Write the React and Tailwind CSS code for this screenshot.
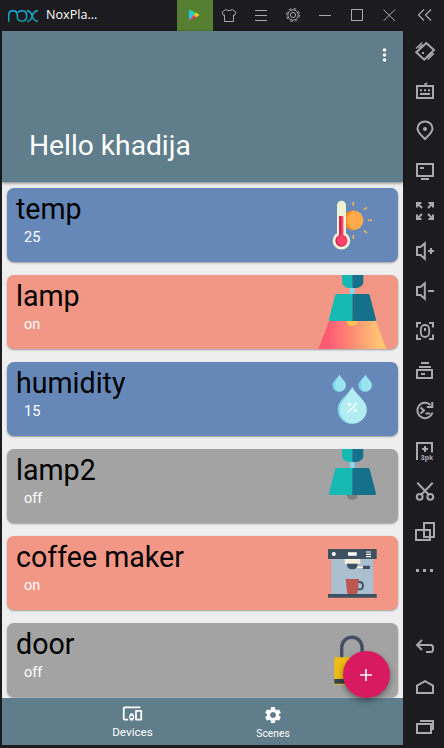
import { MdDevicesOther, MdSettings } from "react-icons/md";

function NoxLogo() {
  return (
    <svg width="32" height="16" viewBox="7 7 32 16" fill="none" stroke="url(#nox)" strokeWidth="1.5">
      <defs>
        <linearGradient id="nox" x1="0" y1="9" x2="0" y2="21" gradientUnits="userSpaceOnUse">
          <stop offset="0" stopColor="#12bbe6" />
          <stop offset="1" stopColor="#109aa6" />
        </linearGradient>
      </defs>
      <path d="M8.700 21v-6.500Q8.700 9.800 13 9.800T17.300 14.500V16Q17.500 20.200 22 20.200T26.700 15T22 9.800Q19 9.800 18 11.500" />
      <path d="M27 9.800C30.500 9.800 31.300 12 32.200 15S34.500 20.200 38 20.200M38 9.800C34.500 9.800 33.200 12 32.200 15S30.500 20.200 27 20.200" />
    </svg>
  );
}

function TitleIcon({ children }) {
  return (
    <div className="h-[31px] w-8">
      <svg width="32" height="31" viewBox="0 0 32 31" fill="none" stroke="#a9a9ac" strokeWidth="1">
        {children}
      </svg>
    </div>
  );
}

function TitleBar() {
  return (
    <header className="flex h-[31px] shrink-0 items-center">
      <div className="flex w-[177px] items-center pl-[7px]">
        <NoxLogo />
        <span className="ml-[7px] font-['Open_Sans',sans-serif] text-[12.600px] leading-none text-white">NoxPla...</span>
      </div>
      <div className="flex h-[31px] w-9 items-center justify-center bg-[#567f31]">
        <svg width="36" height="31" viewBox="0 0 36 31">
          <path d="M12 9.500v11l5.600-5.500z" fill="#2cc3f2" />
          <path d="M12 9.300l7.600 3.600-2.400 2.600z" fill="#1fdc8c" />
          <path d="M12 20.700l7.600-3.600-2.400-2.600z" fill="#ee3b58" />
          <path d="M19.300 12.700l3.200 2.300-3.200 2.300-2.500-2.300z" fill="#fccc1a" />
        </svg>
      </div>
      <TitleIcon>
        <path d="M12.500 9.500Q16 12 19.500 9.500L23 12.500 21.500 15.500 20.500 15V21.500H11.500V15L10.500 15.500 9 12.500z" />
      </TitleIcon>
      <TitleIcon>
        <path d="M10 10.500h12M10 15.500h12M10 20.500h12" />
      </TitleIcon>
      <TitleIcon>
        <circle cx="16" cy="15" r="2.600" />
        <circle cx="16" cy="15" r="5.200" />
        <circle cx="16" cy="15" r="6.500" strokeDasharray="2.600 2.500" />
      </TitleIcon>
      <TitleIcon>
        <path d="M10 15.500h12" />
      </TitleIcon>
      <TitleIcon>
        <rect x="10.500" y="9.500" width="11" height="11" />
      </TitleIcon>
      <TitleIcon>
        <path d="M10.500 9.500l11.500 11.500M22 9.500L10.500 21" />
      </TitleIcon>
      <svg width="38" height="31" viewBox="0 0 38 31" fill="none" stroke="#a9a9ac" strokeWidth="1.200">
        <path d="M19 9.500L13.500 15l5.500 5.500M26 9.500L20.500 15l5.500 5.500" />
      </svg>
    </header>
  );
}

const tools = [
  <>
    <path d="M22.300 12L30 19 20.200 28.700 12.300 21.300z" />
    <path d="M12 17.500l6-6M14.500 17.200l4-3.700M23.500 28.700l6.500-6.200M23.500 26.500l5-4.500" strokeWidth="1.200" />
    <path d="M18 22h2" />
  </>,
  <>
    <rect x="13" y="15" width="16" height="12" />
    <path d="M16 19.300h2M20 19.300h2M24 19.300h2M16 23h10M20.500 14l2.500-2" />
  </>,
  <>
    <path d="M21 28C17.500 24.500 13.500 21.500 13.500 17.500a7.500 7 0 0 1 15 0C28.500 21.500 24.500 24.500 21 28z" />
    <circle cx="21" cy="18" r="2" fill="#a9a9ac" stroke="none" />
  </>,
  <>
    <rect x="13" y="13" width="16" height="12" />
    <path d="M16 17h4M17 28h8" />
  </>,
  <>
    <path d="M17.500 12H13v4.500M24.500 12H29v4.500M17.500 28H13v-4.500M24.500 28H29v-4.500M13 12l5 5M29 12l-5 5M13 28l5-5M29 28l-5-5" />
  </>,
  <>
    <path d="M20.800 12.300L16.500 16H13v8h3.500l4.300 3.700zM24 20h6M27 17v6" />
  </>,
  <>
    <path d="M20.800 12.300L16.500 16H13v8h3.500l4.300 3.700zM24 20h6" />
  </>,
  <>
    <path d="M17 12h-4v4.500M25 12h4v4.500M17 28h-4v-4.500M25 28h4v-4.500" />
    <rect x="16.800" y="14" width="8.400" height="12" rx="4.200" strokeWidth="1.800" />
    <path d="M21 17v3" />
  </>,
  <>
    <path d="M17 12h8M15 16h12M13 19h15v8H13zM17 23h4" />
  </>,
  <>
    <path d="M28.500 21.500a7.700 7.700 0 1 1-2-7.500M28.300 11v5h-5.500" />
    <path d="M16.500 16.500l3.500 3-3.500 3M21.500 22.500h4.500" />
  </>,
  <>
    <path d="M13 29V12h15v9.500M21 15v6M18 18h6" />
    <text x="16.500" y="29" fontSize="7" fill="#b4b4b6" stroke="none" fontFamily="Liberation Mono, monospace" fontWeight="bold">3pk</text>
  </>,
  <>
    <path d="M13.300 11.800l11.500 12M28.700 11.800l-11.500 12" />
    <circle cx="15.700" cy="25.800" r="2.900" />
    <circle cx="26.300" cy="25.800" r="2.900" />
  </>,
  <>
    <rect x="12" y="19" width="14" height="10" />
    <rect x="20" y="12" width="10" height="14" />
  </>,
  <>
    <path d="M12 19.500h3M19 19.500h3M26 19.500h3" strokeWidth="3" />
  </>,
];

const androidKeys = [
  <>
    <path d="M18 14l-5 5 5 5M13 19h13.500q2.500 0 2.500 2.500v2q0 2.500-2.500 2.500H22" />
  </>,
  <>
    <path d="M13 27v-7.500l8-4.300 8 4.300V27z" />
  </>,
  <>
    <path d="M13 18h14v9H13zM16 15h13v9" />
  </>,
];

function ToolButton({ children }) {
  return (
    <svg className="block shrink-0" width="40" height="40" viewBox="0 0 40 40" fill="none" stroke="#a9a9ac" strokeWidth="2">
      {children}
    </svg>
  );
}

function Thermometer() {
  return (
    <>
      <circle cx="36.500" cy="32.300" r="9.900" fill="#ffab4d" />
      <path d="M36.500 22.400a9.900 9.900 0 0 0 0 19.800Q30 38 30 32.300T36.500 22.400z" fill="#fb8b1e" />
      <path d="M36.300 14v3.700M36.300 47v4M46.800 21.600l3.200-2.200M51 32.300h4M46.800 42.600l3.200 2.400" stroke="#ffb25c" strokeWidth="1.500" />
      <rect x="20" y="12.700" width="9" height="38" rx="4.500" fill="#eef2d4" />
      <circle cx="24.400" cy="52.700" r="8.800" fill="#eef2d4" />
      <rect x="22.200" y="28" width="4.200" height="24" rx="1" fill="#ff4169" />
      <path d="M22.200 28h2v22h-2z" fill="#cc1f52" />
      <circle cx="24.400" cy="52.700" r="6" fill="#cc1f52" />
      <circle cx="25" cy="52.200" r="5.300" fill="#ff4169" />
    </>
  );
}

function Lamp({ on }) {
  return (
    <>
      <defs>
        <linearGradient id="beam">
          <stop offset=".15" stopColor="#ff5c74" />
          <stop offset=".9" stopColor="#ffc574" />
        </linearGradient>
      </defs>
      {on && <path d="M12.500 45h46L69.200 74H1.200z" fill="url(#beam)" />}
      <circle cx="35.300" cy="45.500" r="5.600" fill={on ? "#ffc454" : "#808080"} />
      <path d="M33 12h4.500v8H33z" fill="#86d7f2" />
      <path d="M25 0h10.400v13H31q-6-2-6-6z" fill="#16b9b3" />
      <path d="M35.300 0h11v7q0 4-6 6h-5z" fill="#15718b" />
      <path d="M19.500 19h15.900v27H13q-1.500 0-1-2l6-23.500q.3-1.500 1.500-1.500z" fill="#16b9b3" />
      <path d="M35.300 19h15.900q1.200 0 1.600 1.500l6.100 23.500q.5 2-1 2H35.300z" fill="#15718b" />
    </>
  );
}

function Drops() {
  return (
    <>
      <path d="M22.300 12.700C25 17 29 19.500 29 23a6.700 6.700 0 0 1-13.400 0C15.600 19.500 20 17 22.300 12.700z" fill="#98e4ef" />
      <path d="M22.300 12.700C20 17 15.600 19.500 15.600 23a6.700 6.700 0 0 0 6 6.600Q17.500 27 18 22.500T22.300 12.700z" fill="#78d6e8" />
      <path d="M48.300 12.700C51 17 55 19.500 55 23a6.700 6.700 0 0 1-13.400 0C41.600 19.500 46 17 48.300 12.700z" fill="#98e4ef" />
      <path d="M48.300 12.700C46 17 41.600 19.500 41.600 23a6.700 6.700 0 0 0 6 6.600Q43.500 27 44 22.500T48.300 12.700z" fill="#78d6e8" />
      <path d="M35.300 25C40 34 49.800 38.500 49.800 47.300a14.500 14.500 0 0 1-29 0C20.800 38.500 30.500 34 35.300 25z" fill="#b2edf4" />
      <path d="M35.300 25C30.500 34 20.800 38.500 20.800 47.300a14.500 14.500 0 0 0 14 14.500Q22.500 58 23 46.500C23.500 39 30.500 35 35.300 25z" fill="#82dcea" />
      <path d="M30.500 50.500l9.800-9.800" stroke="#fff" strokeWidth="1.300" />
      <circle cx="32.500" cy="42.500" r="1.600" fill="#fff" />
      <circle cx="38.300" cy="48.500" r="1.600" fill="#fff" />
    </>
  );
}

function CoffeeMaker() {
  return (
    <>
      <path d="M14.300 23h42v35h-42z" fill="#aabfd0" />
      <path d="M11 13h48.700v10H11zM11 58h48.700v3.700H11z" fill="#3d5161" />
      <circle cx="16.800" cy="18" r="2" fill="#fff" />
      <path d="M31 16.300h8.700v3.400H31zM49 15.400h5v1.200h-5zM49 17.700h5v1.200h-5zM49 20h5v1.200h-5z" fill="#fff" />
      <path d="M27.700 23h15.500v4.700H27.700z" fill="#f5f1df" />
      <path d="M30 27.700h10.500v2q-1 3.500-5.200 3.500T30 29.700z" fill="#3d5161" />
      <path d="M40 30.500h6v1.500h-6z" fill="#f5f1df" />
      <path d="M46 29.700h7V33h-7z" fill="#3d5161" />
      <path d="M41 46h1.500q3.500 0 3.500 3.700t-3.500 3.700H41" fill="none" stroke="#3d5161" strokeWidth="1.800" />
      <path d="M28.700 43H42l-1.300 13q-.2 2-2 2H32q-1.800 0-2-2z" fill="#bb5650" />
    </>
  );
}

function Padlock() {
  return (
    <>
      <path d="M24.700 35V24.500a10.200 10.200 0 0 1 20.400 0V35" fill="none" stroke="#474f68" strokeWidth="3.400" />
      <path d="M17.300 34.300h35.500v27.400H17.300z" fill="#edbc16" />
      <path d="M17.300 56h35.500v4.800H17.300z" fill="#34454f" />
    </>
  );
}

const devices = [
  { name: "temp", state: "25", color: "bg-[#6688b9]", art: <Thermometer /> },
  { name: "lamp", state: "on", color: "bg-[#f29785]", art: <Lamp on /> },
  { name: "humidity", state: "15", color: "bg-[#6688b9]", art: <Drops /> },
  { name: "lamp2", state: "off", color: "bg-[#a3a3a3]", art: <Lamp /> },
  { name: "coffee maker", state: "on", color: "bg-[#f29785]", art: <CoffeeMaker /> },
  { name: "door", state: "off", color: "bg-[#a3a3a3]", art: <Padlock /> },
];

function DeviceCard({ name, state, color, art }) {
  return (
    <article className={`flex h-[74px] shrink-0 justify-between overflow-hidden rounded-[7px] shadow-[0_1px_2px_rgba(0,0,0,0.35)] ${color}`}>
      <div className="pl-[9px] pt-[4px]">
        <h2 className="whitespace-nowrap text-[28.600px] leading-[34px] text-black">{name}</h2>
        <p className="pl-[8px] pt-[3px] text-[14.500px] leading-[17px] text-white">{state}</p>
      </div>
      <svg className="block shrink-0" width="81" height="74" viewBox="0 0 81 74">{art}</svg>
    </article>
  );
}

function Phone() {
  return (
    <main className="relative ml-[2px] flex h-[714px] w-[401px] flex-col bg-[#eeeeee] font-[Roboto,sans-serif]">
      <div className="z-10 flex h-[151px] shrink-0 items-end justify-between bg-[#607d8b] pb-[19px] pl-[27px] shadow-[0_1px_3px_rgba(0,0,0,0.5)]">
        <h1 className="text-[28.200px] leading-[34px] text-white">Hello khadija</h1>
        <svg className="mb-[100px] mr-[16px]" width="5" height="16" viewBox="0 0 5 16" fill="#fff">
          <circle cx="2.500" cy="3" r="1.800" />
          <circle cx="2.500" cy="8" r="1.800" />
          <circle cx="2.500" cy="13" r="1.800" />
        </svg>
      </div>
      <section className="flex min-h-0 flex-1 flex-col gap-[13px] overflow-hidden pl-[5px] pr-[5px] pt-[6px]">
        {devices.map((d) => (
          <DeviceCard key={d.name} {...d} />
        ))}
      </section>
      <nav className="flex h-[47px] shrink-0 justify-center bg-[#607d8b] text-white">
        <div className="flex w-[141px] flex-col items-center pt-[5px]">
          <MdDevicesOther size={21} />
          <span className="text-[11.700px] leading-[17px]">Devices</span>
        </div>
        <div className="flex w-[140px] flex-col items-center pt-[7px]">
          <MdSettings size={20} />
          <span className="text-[10.300px] leading-[17px]">Scenes</span>
        </div>
      </nav>
      <button className="absolute bottom-[47px] right-[13px] z-20 flex h-[47px] w-[47px] items-center justify-center rounded-full bg-[#d81b60] shadow-[0_3px_6px_rgba(0,0,0,0.4)]">
        <svg className="mr-[1px]" width="12" height="12" viewBox="0 0 12 12" stroke="#fff" strokeWidth="1.600">
          <path d="M0 6h12M6 0v12" />
        </svg>
      </button>
    </main>
  );
}

export default function App() {
  return (
    <div className="flex h-[748px] w-[444px] flex-col overflow-hidden bg-[#1c1b20]">
      <TitleBar />
      <div className="flex">
        <Phone />
        <aside className="ml-[1px] flex w-10 flex-col">
          {tools.map((icon, i) => (
            <ToolButton key={i}>{icon}</ToolButton>
          ))}
          <div className="h-[35px] shrink-0" />
          {androidKeys.map((icon, i) => (
            <ToolButton key={i}>{icon}</ToolButton>
          ))}
        </aside>
      </div>
    </div>
  );
}
